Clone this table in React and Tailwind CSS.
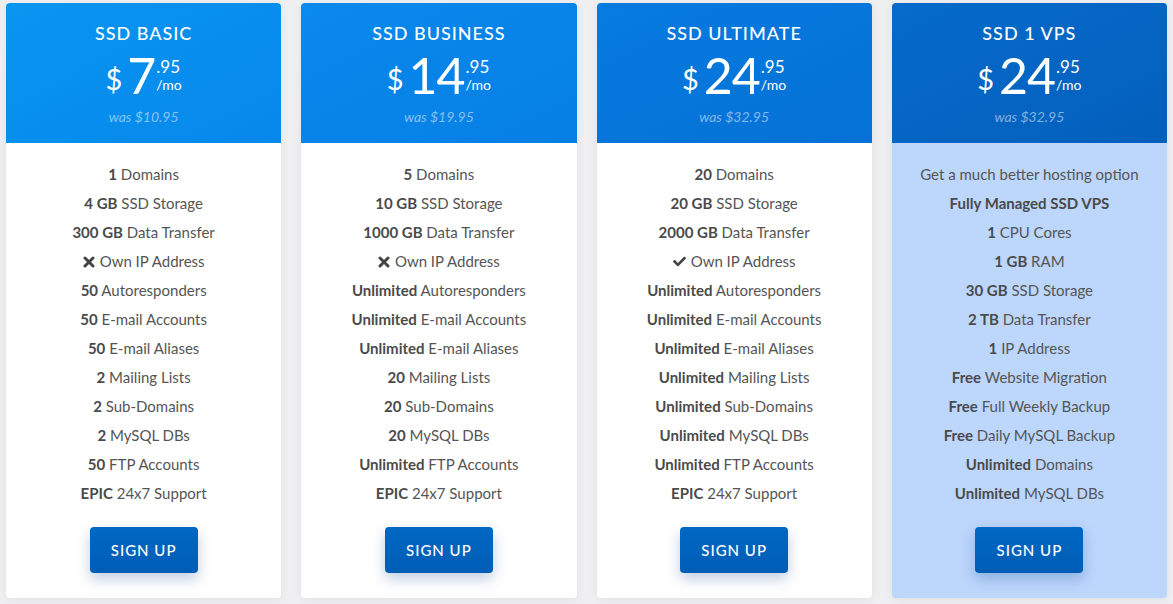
import React from 'react';
import { FaCheck } from 'react-icons/fa';

const plans = [
  {
    name: 'SSD BASIC',
    dollars: '7',
    was: '$10.95',
    head: 'bg-gradient-to-br from-[#0a95f1] to-[#0688ea]',
    body: 'bg-white',
    features: [
      ['1', ' Domains'],
      ['4 GB', ' SSD Storage'],
      ['300 GB', ' Data Transfer'],
      ['x', 'Own IP Address'],
      ['50', ' Autoresponders'],
      ['50', ' E-mail Accounts'],
      ['50', ' E-mail Aliases'],
      ['2', ' Mailing Lists'],
      ['2', ' Sub-Domains'],
      ['2', ' MySQL DBs'],
      ['50', ' FTP Accounts'],
      ['EPIC', ' 24x7 Support'],
    ],
  },
  {
    name: 'SSD BUSINESS',
    dollars: '14',
    was: '$19.95',
    head: 'bg-gradient-to-br from-[#0a89ee] to-[#067fe3]',
    body: 'bg-white',
    features: [
      ['5', ' Domains'],
      ['10 GB', ' SSD Storage'],
      ['1000 GB', ' Data Transfer'],
      ['x', 'Own IP Address'],
      ['Unlimited', ' Autoresponders'],
      ['Unlimited', ' E-mail Accounts'],
      ['Unlimited', ' E-mail Aliases'],
      ['20', ' Mailing Lists'],
      ['20', ' Sub-Domains'],
      ['20', ' MySQL DBs'],
      ['Unlimited', ' FTP Accounts'],
      ['EPIC', ' 24x7 Support'],
    ],
  },
  {
    name: 'SSD ULTIMATE',
    dollars: '24',
    was: '$32.95',
    head: 'bg-gradient-to-br from-[#077be0] to-[#0571d6]',
    body: 'bg-white',
    features: [
      ['20', ' Domains'],
      ['20 GB', ' SSD Storage'],
      ['2000 GB', ' Data Transfer'],
      ['v', 'Own IP Address'],
      ['Unlimited', ' Autoresponders'],
      ['Unlimited', ' E-mail Accounts'],
      ['Unlimited', ' E-mail Aliases'],
      ['Unlimited', ' Mailing Lists'],
      ['Unlimited', ' Sub-Domains'],
      ['Unlimited', ' MySQL DBs'],
      ['Unlimited', ' FTP Accounts'],
      ['EPIC', ' 24x7 Support'],
    ],
  },
  {
    name: 'SSD 1 VPS',
    dollars: '24',
    was: '$32.95',
    head: 'bg-gradient-to-br from-[#066bcb] to-[#045fbc]',
    body: 'bg-[#bcd6fc]',
    features: [
      ['', 'Get a much better hosting option'],
      ['Fully Managed SSD VPS', ''],
      ['1', ' CPU Cores'],
      ['1 GB', ' RAM'],
      ['30 GB', ' SSD Storage'],
      ['2 TB', ' Data Transfer'],
      ['1', ' IP Address'],
      ['Free', ' Website Migration'],
      ['Free', ' Full Weekly Backup'],
      ['Free', ' Daily MySQL Backup'],
      ['Unlimited', ' Domains'],
      ['Unlimited', ' MySQL DBs'],
    ],
  },
];

// heavy multiplication mark, like the ✖ in the picture
const Cross = () => (
  <svg width="12" height="12" viewBox="0 0 12 12" className="text-[#444]">
    <path d="M2 2 L10 10 M10 2 L2 10" stroke="currentColor" strokeWidth="3" strokeLinecap="round" />
  </svg>
);

const Feature = ({ item }) => {
  const [bold, rest] = item;
  if (bold === 'x' || bold === 'v') {
    return (
      <li className="flex items-center justify-center gap-[5px]">
        {bold === 'x' ? <Cross /> : <FaCheck className="text-[13px] text-[#444]" />}
        <span>{rest}</span>
      </li>
    );
  }
  return (
    <li className="whitespace-pre">
      {bold && <span className="font-bold text-[#4a4a4a]">{bold}</span>}
      {rest}
    </li>
  );
};

const PlanCard = ({ plan }) => (
  <div className={`flex-1 flex flex-col rounded-[4px] overflow-hidden shadow-[0_2px_10px_rgba(0,0,0,0.06)] ${plan.body}`}>
    <div className={`h-[140px] flex flex-col items-center pt-[18px] text-white ${plan.head}`}>
      <h2 className="text-[18px] leading-6 tracking-[1px] font-medium">{plan.name}</h2>
      <div className="flex items-start mt-[3px]">
        <span className="text-[29px] leading-none mt-[16px] mr-[5px]">$</span>
        <span className="text-[50px] leading-none mt-[2px] tracking-[-1px]">{plan.dollars}</span>
        <div className="flex flex-col ml-[1px]">
          <span className="text-[17px] leading-none mt-[10px]">.95</span>
          <span className="text-[14px] leading-none mt-[3px]">/mo</span>
        </div>
      </div>
      <p className="text-[14px] italic text-white/50 mt-[6px]">was {plan.was}</p>
    </div>
    <ul className="pt-[17px] text-center text-[15px] leading-[29px] text-[#555]">
      {plan.features.map((f, i) => (
        <Feature key={i} item={f} />
      ))}
    </ul>
    <div className="flex justify-center mt-[19px] pb-[25px]">
      <button className="w-[108px] h-[46px] rounded-[4px] bg-gradient-to-b from-[#0068c4] to-[#005db5] text-white text-[15px] tracking-[1px] font-medium shadow-[0_6px_14px_rgba(0,60,140,0.25)]">
        SIGN UP
      </button>
    </div>
  </div>
);

export default function App() {
  return (
    <div className="w-[1173px] h-[604px] bg-[#efeff2] px-[6px] pt-[3px] flex gap-5 items-start" style={{ fontFamily: 'Lato, "Noto Sans", sans-serif' }}>
      {plans.map((p) => (
        <PlanCard key={p.name} plan={p} />
      ))}
    </div>
  );
}
